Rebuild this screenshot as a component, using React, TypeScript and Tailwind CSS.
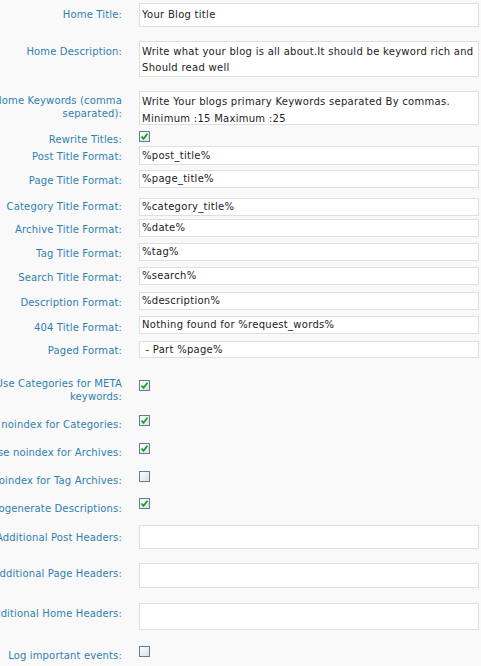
import React from "react";

type Row = {
  label: string;
  kind: "input" | "area" | "check";
  value?: string;
  lines?: string[];
  checked?: boolean;
  rowCls: string;
  ctrlCls: string;
  labelCls: string;
};

const rows: Row[] = [
  { label: "Home Title:", kind: "input", value: "Your Blog title", rowCls: "mt-[3px] h-[24px]", ctrlCls: "h-[24px]", labelCls: "pt-[5px]" },
  { label: "Home Description:", kind: "area", lines: ["Write what your blog is all about.It should be keyword rich and", "Should read well"], rowCls: "mt-[14px] h-[36px]", ctrlCls: "h-[36px] pt-[2px] leading-[16px]", labelCls: "pt-[4px]" },
  { label: "Home Keywords (comma separated):", kind: "area", lines: ["Write Your blogs primary Keywords separated By commas.", "Minimum :15 Maximum :25"], rowCls: "mt-[14px] h-[34px]", ctrlCls: "h-[34px] pt-[1px] leading-[17px]", labelCls: "pt-[3px]" },
  { label: "Rewrite Titles:", kind: "check", checked: true, rowCls: "mt-[6px] h-[10px]", ctrlCls: "", labelCls: "pt-[2px]" },
  { label: "Post Title Format:", kind: "input", value: "%post_title%", rowCls: "mt-[5px] h-[19px]", ctrlCls: "h-[19px]", labelCls: "pt-[4px]" },
  { label: "Page Title Format:", kind: "input", value: "%page_title%", rowCls: "mt-[5px] h-[18px]", ctrlCls: "h-[18px]", labelCls: "pt-[4px]" },
  { label: "Category Title Format:", kind: "input", value: "%category_title%", rowCls: "mt-[10px] h-[18px]", ctrlCls: "h-[18px]", labelCls: "pt-[2px]" },
  { label: "Archive Title Format:", kind: "input", value: "%date%", rowCls: "mt-[3px] h-[18px]", ctrlCls: "h-[18px]", labelCls: "pt-[4px]" },
  { label: "Tag Title Format:", kind: "input", value: "%tag%", rowCls: "mt-[6px] h-[18px]", ctrlCls: "h-[18px]", labelCls: "pt-[4px]" },
  { label: "Search Title Format:", kind: "input", value: "%search%", rowCls: "mt-[6px] h-[18px]", ctrlCls: "h-[18px]", labelCls: "pt-[4px]" },
  { label: "Description Format:", kind: "input", value: "%description%", rowCls: "mt-[7px] h-[18px]", ctrlCls: "h-[18px]", labelCls: "pt-[4px]" },
  { label: "404 Title Format:", kind: "input", value: "Nothing found for %request_words%", rowCls: "mt-[6px] h-[18px]", ctrlCls: "h-[18px]", labelCls: "pt-[5px]" },
  { label: "Paged Format:", kind: "input", value: " - Part %page%", rowCls: "mt-[7px] h-[17px]", ctrlCls: "h-[17px]", labelCls: "pt-[3px]" },
  { label: "Use Categories for META keywords:", kind: "check", checked: true, rowCls: "mt-[22px] h-[11px]", ctrlCls: "", labelCls: "-mt-[3px]" },
  { label: "Use noindex for Categories:", kind: "check", checked: true, rowCls: "mt-[24px] h-[11px]", ctrlCls: "", labelCls: "pt-[3px]" },
  { label: "Use noindex for Archives:", kind: "check", checked: true, rowCls: "mt-[17px] h-[11px]", ctrlCls: "", labelCls: "pt-[3px]" },
  { label: "Use noindex for Tag Archives:", kind: "check", checked: false, rowCls: "mt-[17px] h-[10px]", ctrlCls: "", labelCls: "pt-[3px]" },
  { label: "Autogenerate Descriptions:", kind: "check", checked: true, rowCls: "mt-[17px] h-[11px]", ctrlCls: "", labelCls: "pt-[4px]" },
  { label: "Additional Post Headers:", kind: "input", value: "", rowCls: "mt-[16px] h-[24px]", ctrlCls: "h-[24px]", labelCls: "pt-[6px]" },
  { label: "Additional Page Headers:", kind: "input", value: "", rowCls: "mt-[14px] h-[25px]", ctrlCls: "h-[25px]", labelCls: "pt-[4px]" },
  { label: "Additional Home Headers:", kind: "input", value: "", rowCls: "mt-[15px] h-[27px]", ctrlCls: "h-[27px]", labelCls: "pt-[4px]" },
  { label: "Log important events:", kind: "check", checked: false, rowCls: "mt-[16px] h-[11px]", ctrlCls: "", labelCls: "pt-[3px]" },
];

function Checkbox({ checked }: { checked?: boolean }) {
  return (
    <div className="w-[11px] h-[11px] border border-[#5a7ea4] bg-gradient-to-br from-[#ffffff] to-[#dcdfe6] flex items-center justify-center">
      {checked && (
        <svg width="9" height="9" viewBox="0 0 9 9">
          <path d="M1.5 4.5 L3.5 6.8 L7.5 1.8" fill="none" stroke="#19a219" strokeWidth="1.8" />
        </svg>
      )}
    </div>
  );
}

export default function App() {
  return (
    <div
      className="w-[481px] h-[666px] overflow-hidden bg-[#f9f9f9] text-[10px]"
      style={{ fontFamily: '"DejaVu Sans", Verdana, sans-serif' }}
    >
      <div className="flex flex-col">
        {rows.map((r, i) => (
          <div key={i} className={"flex items-start shrink-0 " + r.rowCls}>
            <div
              className={
                "w-[164px] -ml-[42px] shrink-0 text-right leading-[13px] tracking-[0.15px] text-[#2f80b0] " + r.labelCls
              }
            >
              {r.label}
            </div>
            <div className="ml-[17px] tracking-[0.28px]">
              {r.kind === "check" ? (
                <Checkbox checked={r.checked} />
              ) : r.kind === "area" ? (
                <div className={"w-[340px] border border-[#dfdfdf] bg-white px-[2px] text-[#222] " + r.ctrlCls}>
                  {r.lines!.map((l, j) => (
                    <div key={j} className="whitespace-nowrap">
                      {l}
                    </div>
                  ))}
                </div>
              ) : (
                <div
                  className={
                    "w-[340px] border border-[#dfdfdf] bg-white px-[2px] flex items-center text-[#222] leading-[16px] whitespace-pre " +
                    r.ctrlCls
                  }
                >
                  {r.value}
                </div>
              )}
            </div>
          </div>
        ))}
      </div>
    </div>
  );
}
